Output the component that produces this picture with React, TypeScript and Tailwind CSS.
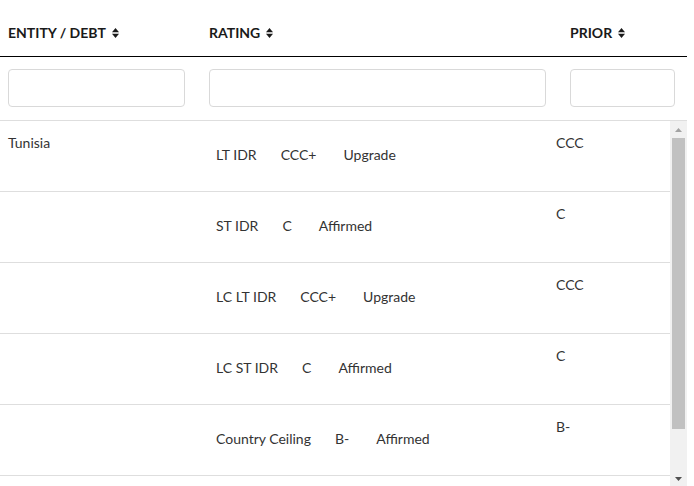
import React from "react";

const rows = [
  { entity: "Tunisia", type: "LT IDR", rating: "CCC+", action: "Upgrade", prior: "CCC" },
  { entity: "", type: "ST IDR", rating: "C", action: "Affirmed", prior: "C" },
  { entity: "", type: "LC LT IDR", rating: "CCC+", action: "Upgrade", prior: "CCC" },
  { entity: "", type: "LC ST IDR", rating: "C", action: "Affirmed", prior: "C" },
  { entity: "", type: "Country Ceiling", rating: "B-", action: "Affirmed", prior: "B-" },
];

function SortIcon() {
  return (
    <svg width="7" height="10" viewBox="0 0 7 10" className="ml-[6px] inline-block">
      <path d="M0 4.2 L3.5 0 L7 4.2 Z" fill="#1a1a1a" />
      <path d="M0 5.8 L7 5.8 L3.5 10 Z" fill="#1a1a1a" />
    </svg>
  );
}

export default function App() {
  return (
    <div className="w-[687px] bg-white text-[#1a1a1a] font-['Lato','Liberation_Sans',sans-serif]">
      {/* header */}
      <div className="flex items-start h-[57px] border-b border-black pt-[23px] text-[14px] leading-[20px] font-bold">
        <div className="w-[201px] pl-[8px] flex items-center h-[20px]">ENTITY / DEBT<SortIcon /></div>
        <div className="w-[361px] pl-[8px] flex items-center h-[20px]">RATING<SortIcon /></div>
        <div className="flex-1 pl-[8px] flex items-center h-[20px]">PRIOR<SortIcon /></div>
      </div>

      {/* filters */}
      <div className="flex h-[64px] border-b border-[#dedede] pt-[12px]">
        <div className="w-[201px] pl-[8px]">
          <input className="w-[177px] h-[38px] rounded-[4px] border border-[#d9d9d9] outline-none" />
        </div>
        <div className="w-[361px] pl-[8px]">
          <input className="w-[337px] h-[38px] rounded-[4px] border border-[#d9d9d9] outline-none" />
        </div>
        <div className="flex-1 pl-[8px]">
          <input className="w-[105px] h-[38px] rounded-[4px] border border-[#d9d9d9] outline-none" />
        </div>
      </div>

      {/* body */}
      <div className="flex h-[366px] overflow-hidden">
        <div className="w-[670px] text-[14px] leading-[20px] text-[#333]">
          {rows.map((r, i) => (
            <div key={i} className="flex h-[71px] border-b border-[#dedede]">
              <div className="w-[200px] pl-[8px] pt-[12px]">{r.entity}</div>
              <div className="w-[348px] pl-[16px] pt-[24px] flex">
                <span className="mr-[24px]">{r.type}</span>
                <span className="mr-[27px]">{r.rating}</span>
                <span>{r.action}</span>
              </div>
              <div className="flex-1 pl-[8px] pt-[12px]">{r.prior}</div>
            </div>
          ))}
        </div>

        {/* scrollbar */}
        <div className="w-[17px] bg-[#f1f1f1] flex flex-col items-center">
          <div className="h-[17px] flex items-center justify-center">
            <svg width="7" height="4" viewBox="0 0 7 4">
              <path d="M0 4 L3.5 0 L7 4 Z" fill="#a3a3a3" />
            </svg>
          </div>
          <div className="w-[13px] h-[291px] bg-[#c1c1c1]" />
          <div className="flex-1" />
          <div className="h-[17px] flex items-center justify-center">
            <svg width="7" height="4" viewBox="0 0 7 4">
              <path d="M0 0 L7 0 L3.5 4 Z" fill="#505050" />
            </svg>
          </div>
        </div>
      </div>
    </div>
  );
}
